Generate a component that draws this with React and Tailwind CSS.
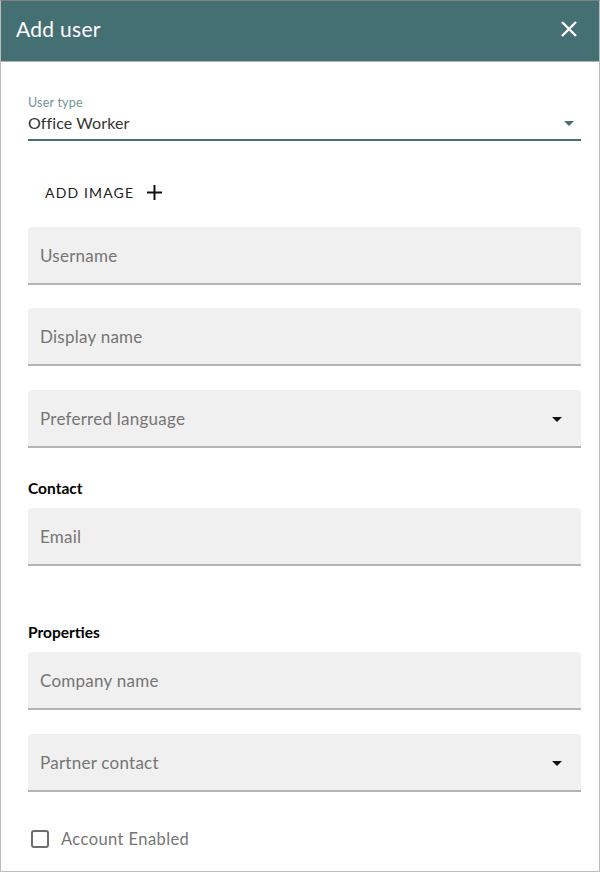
import React from "react";

const font = "font-['Lato','Noto_Sans',sans-serif]";

const Caret = ({ color = "#111" }) => (
  <svg width="10" height="5" viewBox="0 0 10 5" className="shrink-0">
    <path d="M0 0h10L5 5z" fill={color} />
  </svg>
);

const Field = ({ label, select, className = "" }) => (
  <div
    className={`flex h-[58px] w-[553px] items-center justify-between rounded-t-[4px] border-b-2 border-[#b4b4b4] bg-[#f0f0f0] pt-[2px] pl-3 pr-[19px] ${className}`}
  >
    <span className="text-[17px] tracking-[0.25px] text-[#757575]">{label}</span>
    {select && <Caret />}
  </div>
);

const SectionTitle = ({ children, className = "" }) => (
  <div className={`text-[15.5px] leading-[18px] font-bold text-black ${className}`}>{children}</div>
);

export default function App() {
  return (
    <div className={`${font} box-border h-[872px] w-[600px] overflow-hidden border border-[#bcbcbc] border-t-[#808080] bg-white`}>
      {/* Header */}
      <div className="flex h-[61px] items-center justify-between border-b border-[#a9b9ba] bg-[#457073] pb-[4px] pl-[15px] pr-[21px]">
        <h1 className="text-[21px] tracking-[0.3px] text-white">Add user</h1>
        <svg width="18" height="18" viewBox="0 0 18 18" fill="none" stroke="white" strokeWidth="2.4">
          <path d="M2 2l14 14M16 2L2 16" />
        </svg>
      </div>

      <div className="flex flex-col pl-[27px]">
        {/* User type */}
        <div className="mt-[34px] w-[553px] border-b-2 border-[#457073]">
          <div className="text-[12.5px] leading-[14px] tracking-[0.2px] text-[#6f9396]">User type</div>
          <div className="mt-[1px] flex h-[28px] items-center justify-between pr-[7px] pb-[4px]">
            <span className="text-[16px] tracking-[0.1px] text-[#333]">Office Worker</span>
            <Caret color="#457073" />
          </div>
        </div>

        {/* Add image */}
        <button className="mt-[37px] flex h-[28px] items-center gap-[13px] self-start pl-[17px] text-[14px] tracking-[1.15px] text-[#222]">
          ADD IMAGE
          <svg width="15" height="15" viewBox="0 0 15 15" stroke="#111" strokeWidth="2">
            <path d="M7.5 0v15M0 7.5h15" />
          </svg>
        </button>

        <Field label="Username" className="mt-[21px]" />
        <Field label="Display name" className="mt-[23px]" />
        <Field label="Preferred language" select className="mt-[24px]" />

        <SectionTitle className="mt-[31px]">Contact</SectionTitle>
        <Field label="Email" className="mt-[11px]" />

        <SectionTitle className="mt-[57px]">Properties</SectionTitle>
        <Field label="Company name" className="mt-[11px]" />
        <Field label="Partner contact" select className="mt-[24px]" />

        {/* Account enabled */}
        <div className="mt-[35px] flex items-center gap-[12px] pl-[3px]">
          <span className="box-border h-[18px] w-[18px] rounded-[3px] border-2 border-[#6e6e6e]" />
          <span className="text-[16.5px] tracking-[0.42px] text-[#757575]">Account Enabled</span>
        </div>
      </div>
    </div>
  );
}
